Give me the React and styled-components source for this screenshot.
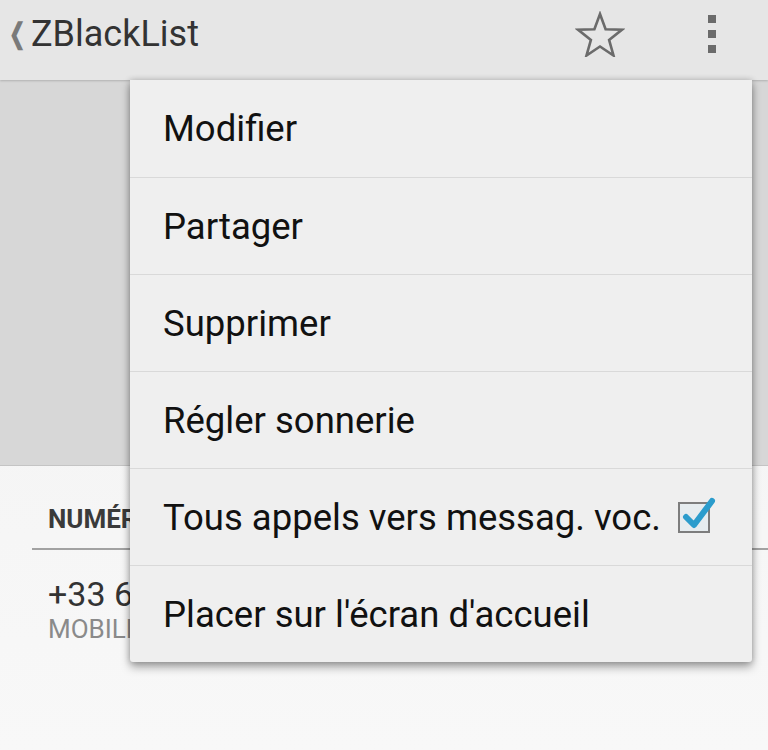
import React from 'react';
import styled, { createGlobalStyle } from 'styled-components';

const GlobalStyle = createGlobalStyle`
  html, body {
    margin: 0;
    padding: 0;
    background: #f4f4f4;
    font-family: Roboto, "Noto Sans", sans-serif;
  }
`

const Screen = styled.div`
  position: relative;
  width: 768px;
  height: 750px;
  overflow: hidden;
  display: flex;
  flex-direction: column;
  background: linear-gradient(#f1f1f1, #f8f8f8);
`
const ActionBar = styled.div`
  height: 80px;
  flex-shrink: 0;
  display: flex;
  align-items: flex-start;
  padding-top: 6px;
  box-sizing: border-box;
  background: #e6e6e6;
  box-shadow: 0 1px 2px rgba(0,0,0,0.18);
  position: relative;
  z-index: 1;
`
const Up = styled.span`
  margin: 8px 0 0 6px;
  font-size: 28px;
  line-height: 40px;
  color: #7a7a7a;
  font-weight: bold;
  transform: scaleX(0.7);
`
const Title = styled.h1`
  margin: 6px 0 0 2px;
  font-size: 36px;
  line-height: 44px;
  font-weight: 400;
  color: #333;
  flex: 1;
`
const ActionIcon = styled.div`
  width: 112px;
  height: 56px;
  display: flex;
  align-items: center;
  justify-content: center;
`
const Dots = styled.div`
  display: flex;
  flex-direction: column;
  gap: 7px;
  span {
    width: 8px;
    height: 8px;
    background: #6b6b6b;
  }
`
const PhotoArea = styled.div`
  height: 385px;
  flex-shrink: 0;
  background: #d7d7d7;
  border-bottom: 1px solid #c4c4c4;
`
const Details = styled.div`
  padding: 38px 0 0 32px;
`
const SectionHead = styled.div`
  padding: 0 0 14px 16px;
  border-bottom: 2px solid #a2a2a2;
  font-size: 26px;
  line-height: 30px;
  font-weight: 700;
  color: #3a3a3a;
  white-space: nowrap;
`
const Entry = styled.div`
  padding: 24px 0 0 16px;
`
const Number = styled.div`
  font-size: 34px;
  color: #333;
  line-height: 40px;
`
const Kind = styled.div`
  font-size: 26px;
  color: #8a8a8a;
  line-height: 30px;
`
const Menu = styled.div`
  position: absolute;
  left: 130px;
  top: 80px;
  width: 622px;
  background: #efefef;
  border-radius: 0 0 3px 3px;
  box-shadow: 0 5px 10px rgba(0,0,0,0.35), 0 0 6px rgba(0,0,0,0.2);
  z-index: 2;
`
const Item = styled.div`
  height: 97px;
  display: flex;
  align-items: center;
  padding-left: 33px;
  font-size: 36.5px;
  color: #111;
  border-top: ${p => (p.first ? 'none' : '1px solid #d9d9d9')};
  box-sizing: border-box;
  white-space: nowrap;
`
const Check = styled.span`
  margin-left: 17px;
  width: 32px;
  height: 31px;
  border: 2px solid #7d7d7d;
  background: #e6ecef;
  position: relative;
  box-sizing: border-box;
  svg {
    position: absolute;
    left: 1px;
    top: -8px;
  }
`

const items = [
  'Modifier',
  'Partager',
  'Supprimer',
  'Régler sonnerie',
  'Tous appels vers messag. voc.',
  "Placer sur l'écran d'accueil",
]

const App = () => {
  return (
    <Screen>
      <GlobalStyle />
      <ActionBar>
        <Up>&#x276E;</Up>
        <Title>ZBlackList</Title>
        <ActionIcon>
          <svg width="50" height="46" viewBox="0 0 50 46">
            <polygon
              points="25,3 30.6,18.2 46.8,18.8 34.1,28.9 38.5,44.5 25,35.5 11.5,44.5 15.9,28.9 3.2,18.8 19.4,18.2"
              fill="none"
              stroke="#6b6b6b"
              strokeWidth="2.6"
            />
          </svg>
        </ActionIcon>
        <ActionIcon>
          <Dots><span /><span /><span /></Dots>
        </ActionIcon>
      </ActionBar>
      <PhotoArea />
      <Details>
        <SectionHead>NUMÉRO DE TÉLÉPHONE</SectionHead>
        <Entry>
          <Number>+33 6 12 34 56 78</Number>
          <Kind>MOBILE</Kind>
        </Entry>
      </Details>

      <Menu>
        {items.map((label, i) => (
          <Item key={i} first={i === 0}>
            {label}
            {i === 4 && (
              <Check>
                <svg width="36" height="36" viewBox="0 0 36 36">
                  <path d="M5 21 L13 29 L31 5" fill="none" stroke="#2b9ccc" strokeWidth="6" strokeLinecap="round" strokeLinejoin="round" />
                </svg>
              </Check>
            )}
          </Item>
        ))}
      </Menu>
    </Screen>
  );
};
export default App;
